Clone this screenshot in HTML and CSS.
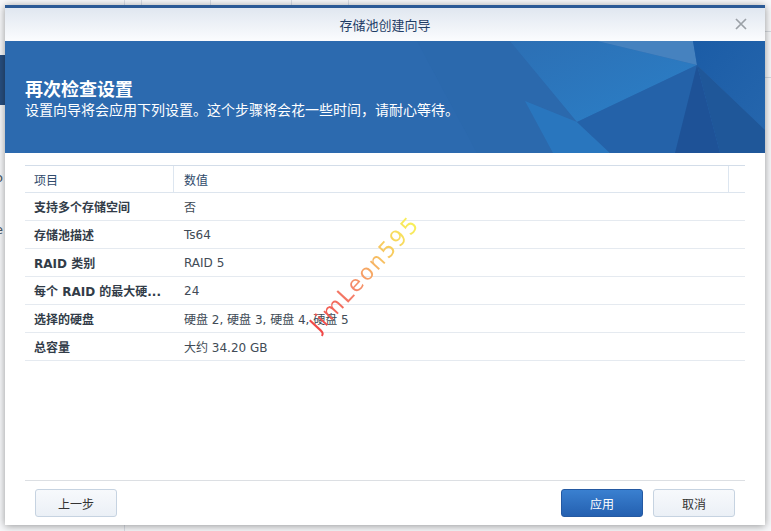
FILE: index.html
```html
<!DOCTYPE html>
<html lang="zh-CN">
<head>
<meta charset="utf-8">
<title>存储池创建向导</title>
<link rel="stylesheet" href="styles.css">
</head>
<body>
<div class="desk">
  <span class="vl v1"></span><span class="vl v2"></span><span class="vl v3"></span><span class="vl v4"></span><span class="vl v5"></span>
  <span class="side-block"></span>
  <span class="side-text t1">o</span><span class="side-text t2">e</span>
  <span class="hl h1"></span><span class="hl h2"></span>
  <span class="vl vb"></span>
</div>
<div class="dialog">
  <div class="titlebar">
    <span class="title">存储池创建向导</span>
    <span class="close"><svg width="12" height="12" viewBox="0 0 12 12"><path d="M1 1L11 11M11 1L1 11" stroke="#9ba1a7" stroke-width="1.7" fill="none"/></svg></span>
  </div>
  <div class="banner">
    <svg class="banner-bg" width="760" height="112" viewBox="0 0 760 112" preserveAspectRatio="none">
      <defs>
        <linearGradient id="gBright" x1="0" y1="0" x2="1" y2="1">
          <stop offset="0" stop-color="#2c6fb4"/>
          <stop offset="1" stop-color="#2b80c8"/>
        </linearGradient>
        <linearGradient id="gRight" x1="0" y1="0" x2="1" y2="1">
          <stop offset="0" stop-color="#1b5ca6"/>
          <stop offset="1" stop-color="#2566ad"/>
        </linearGradient>
      </defs>
      <rect width="760" height="112" fill="#2c6aaf"/>
      <polygon points="412,0 505,0 572,81 605,112 472,112" fill="#2b69ad"/>
      <polygon points="505,0 592,0 692,24 572,81" fill="url(#gBright)"/>
      <polygon points="520,60 572,81 605,112 548,112" fill="#2a7cc4" opacity="0.7"/>
      <polygon points="592,0 688,0 692,24" fill="#4682bf"/>
      <polygon points="688,0 760,0 760,89 692,24" fill="url(#gRight)"/>
      <polygon points="692,24 760,89 760,112 715,112" fill="#1f5799"/>
      <polygon points="692,24 715,112 605,112 572,81" fill="#2462a9"/>
      <polygon points="692,24 715,112 670,112" fill="#1e5297"/>
    </svg>
    <h1 class="banner-title">再次检查设置</h1>
    <p class="banner-sub">设置向导将会应用下列设置。这个步骤将会花一些时间，请耐心等待。</p>
  </div>
  <div class="content">
    <div class="grid">
      <div class="row head">
        <div class="cell key">项目</div>
        <div class="cell val">数值</div>
        <div class="cell scroll"></div>
      </div>
      <div class="row"><div class="cell key">支持多个存储空间</div><div class="cell val">否</div></div>
      <div class="row"><div class="cell key">存储池描述</div><div class="cell val">Ts64</div></div>
      <div class="row"><div class="cell key">RAID 类别</div><div class="cell val">RAID 5</div></div>
      <div class="row"><div class="cell key">每个 RAID 的最大硬...</div><div class="cell val">24</div></div>
      <div class="row"><div class="cell key">选择的硬盘</div><div class="cell val">硬盘 2, 硬盘 3, 硬盘 4, 硬盘 5</div></div>
      <div class="row"><div class="cell key">总容量</div><div class="cell val">大约 34.20 GB</div></div>
    </div>
    <span class="watermark">JimLeon595</span>
  </div>
  <div class="footer">
    <button class="btn">上一步</button>
    <span class="spacer"></span>
    <button class="btn primary">应用</button>
    <button class="btn">取消</button>
  </div>
</div>
</body>
</html>
```
FILE: styles.css
```css
* { box-sizing: border-box; }
html, body { margin: 0; }
body {
  width: 771px;
  height: 531px;
  overflow: hidden;
  background: #f7f8fa;
  font-family: "DejaVu Sans", "Noto Sans CJK SC", sans-serif;
  position: relative;
  padding: 5px 0 0 5px;
}
.desk { position: absolute; inset: 0; }
.vl { position: absolute; top: 0; width: 1px; height: 6px; background: #d9dee6; }
.v1 { left: 124px; } .v2 { left: 141px; } .v3 { left: 210px; } .v4 { left: 291px; } .v5 { left: 348px; }
.vb { left: 124px; top: 525px; height: 6px; }
.hl { position: absolute; left: 765px; width: 6px; height: 1px; background: #d5d9df; }
.h1 { top: 31px; } .h2 { top: 77px; }
.side-block { position: absolute; left: 0; top: 55px; width: 6px; height: 50px; background: #284f80; }
.side-text { position: absolute; left: -5px; font-size: 13px; color: #4a5866; }
.t1 { top: 170px; } .t2 { top: 222px; }

.dialog {
  position: relative;
  width: 760px;
  height: 520px;
  background: #fff;
  border-top: 3px solid #2b5a96;
  box-shadow: 0 1px 8px rgba(0,0,0,0.4);
  display: flex;
  flex-direction: column;
}
.titlebar {
  height: 33px;
  background: linear-gradient(#e0e7f0, #fbfcfe);
  display: flex;
  align-items: center;
  justify-content: center;
  position: relative;
}
.title { font-size: 13px; color: #1f3d66; font-family: "Noto Sans CJK SC", sans-serif; }
.close { position: absolute; right: 18px; top: 10px; width: 12px; height: 12px; display: block; }
.close svg { display: block; }

.banner {
  height: 112px;
  position: relative;
  padding: 36px 20px 0;
  color: #fff;
  overflow: hidden;
}
.banner-bg { position: absolute; left: 0; top: 0; }
.banner-title {
  position: relative;
  margin: 0;
  font-size: 18px;
  line-height: 22px;
  font-weight: bold;
  font-family: "Noto Sans CJK SC", sans-serif;
}
.banner-sub {
  position: relative;
  margin: 0;
  font-size: 14px;
  line-height: 20px;
  font-family: "Noto Sans CJK SC", sans-serif;
}

.content {
  flex: 1;
  padding: 12px 20px 0;
  position: relative;
}
.grid { border-top: 1px solid #d3dde9; }
.row {
  display: flex;
  height: 28px;
  border-bottom: 1px solid #e5eaf0;
  font-size: 12px;
}
.row.head { height: 27px; border-bottom-color: #dde5ee; }
.cell { display: flex; align-items: center; white-space: nowrap; }
.key {
  width: 149px;
  padding-left: 9px;
  font-weight: bold;
  color: #323c48;
}
.val { flex: 1; padding-left: 10px; color: #414b56; }
.head .key { font-weight: normal; color: #2f4a6b; border-right: 1px solid #dde6f0; }
.head .val { color: #2f4a6b; border-right: 1px solid #dde6f0; }
.scroll { width: 16px; }

.watermark {
  position: absolute;
  left: 318px;
  top: 160px;
  font-family: "DejaVu Sans", sans-serif;
  font-size: 22px;
  letter-spacing: 2px;
  transform: rotate(-47deg);
  transform-origin: left bottom;
  background: linear-gradient(90deg, #f04545 0%, #f4806a 35%, #f7c060 65%, #f8f45a 100%);
  -webkit-background-clip: text;
  background-clip: text;
  color: transparent;
  line-height: 24px;
}

.footer {
  margin: 0 20px;
  border-top: 1px solid #dcdfe3;
  padding: 8px 10px 8px;
  display: flex;
  gap: 10px;
}
.spacer { flex: 1; }
.btn {
  width: 82px;
  height: 28px;
  border: 1px solid #c6d3e1;
  border-radius: 3px;
  background: linear-gradient(#f7f9fc, #ebf0f6);
  font-family: "Noto Sans CJK SC", sans-serif;
  font-size: 12px;
  color: #333;
  padding: 0;
}
.btn.primary {
  border-color: #2459a2;
  background: linear-gradient(#3a80d0, #2460b0);
  color: #fff;
}
```
